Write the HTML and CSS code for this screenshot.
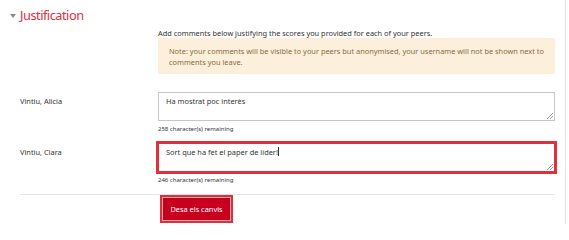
FILE: index.html
```html
<!DOCTYPE html>
<html lang="ca">
<head>
<meta charset="utf-8">
<title>Justification</title>
<link rel="stylesheet" href="styles.css">
</head>
<body>
<div class="page">
  <div class="legend">
    <span class="caret"></span>
    <h2 class="title">Justification</h2>
  </div>
  <div class="form">
    <div class="label"></div>
    <div class="field">
      <p class="intro">Add comments below justifying the scores you provided for each of your peers.</p>
      <div class="note">Note: your comments will be visible to your peers but anonymised, your username will not be shown next to comments you leave.</div>
    </div>

    <div class="label label-first">Vintiu, Alicia</div>
    <div class="field field-first">
      <div class="textarea">Ha mostrat poc interès<span class="grip"></span></div>
      <div class="counter">258 character(s) remaining</div>
    </div>

    <div class="label label-second">Vintiu, Clara</div>
    <div class="field field-second">
      <div class="textarea focused">Sort que ha fet el paper de líder!<span class="cursor"></span><span class="grip"></span></div>
      <div class="counter">246 character(s) remaining</div>
    </div>
  </div>
  <div class="separator"></div>
  <div class="actions">
    <button class="btn">Desa els canvis</button>
  </div>
</div>
</body>
</html>
```
FILE: styles.css
```css
html, body {
  margin: 0;
  padding: 0;
  background: #fff;
}
body {
  font-family: "Noto Sans", "Open Sans", sans-serif;
  color: #333;
  font-size: 7.4px;
}
.page {
  width: 566px;
  height: 224px;
  border-right: 1px solid #e6e6e6;
  box-sizing: border-box;
  overflow: hidden;
}
.legend {
  display: flex;
  align-items: center;
  padding: 5px 0 0 10px;
  height: 20px;
}
.caret {
  width: 0;
  height: 0;
  border-left: 3.5px solid transparent;
  border-right: 3.5px solid transparent;
  border-top: 4px solid #888;
  margin-right: 4px;
  margin-top: 2px;
}
.title {
  margin: 0;
  font-size: 12.8px;
  letter-spacing: -0.5px;
  font-weight: 400;
  color: #e0303c;
  line-height: 20px;
}
.form {
  display: grid;
  grid-template-columns: 138px 397px;
  padding-left: 20px;
}
.field {
  display: flex;
  flex-direction: column;
}
.intro {
  margin: 3px 0 0 0;
  line-height: 10px;
  color: #333;
}
.note {
  background: #fcefdc;
  color: #8a6d3b;
  line-height: 11px;
  padding: 7.5px 4px 6.5px 11px;
  height: 36px;
  box-sizing: border-box;
}
.label {
  color: #333;
  line-height: 12px;
}
.label-first { padding-top: 21px; }
.field-first { padding-top: 18px; }
.label-second { padding-top: 12.5px; }
.field-second { padding-top: 9.5px; }
.textarea {
  position: relative;
  height: 29px;
  box-sizing: border-box;
  border: 1px solid #c6c6c6;
  padding: 3px 7px;
  line-height: 11px;
  color: #333;
  background: #fff;
}
.textarea.focused {
  border-color: #e0303c;
  box-shadow: 0 0 0 2px #e0303c;
}
.cursor {
  display: inline-block;
  width: 1px;
  height: 9px;
  background: #333;
  vertical-align: -1px;
}
.grip {
  position: absolute;
  right: 1px;
  bottom: 1px;
  width: 6px;
  height: 6px;
  background: linear-gradient(135deg, transparent 0 45%, #999 45% 55%, transparent 55% 70%, #999 70% 80%, transparent 80%);
}
.counter {
  font-size: 6px;
  line-height: 9px;
  margin-top: 3.5px;
  color: #333;
}
.separator {
  margin: 9.5px 0 0 20px;
  width: 535px;
  height: 1px;
  background: #e6e6e6;
}
.actions { padding: 3px 0 0 163px; }
.btn {
  display: block;
  font-family: "Noto Sans", "Open Sans", sans-serif;
  font-size: 7.4px;
  line-height: 12px;
  color: #fff;
  background: #c8001e;
  border: none;
  width: 67px;
  height: 22px;
  padding: 0;
  box-shadow: 0 0 0 1px #b5b5b5, 0 0 0 3px #e52d3a;
}
```
